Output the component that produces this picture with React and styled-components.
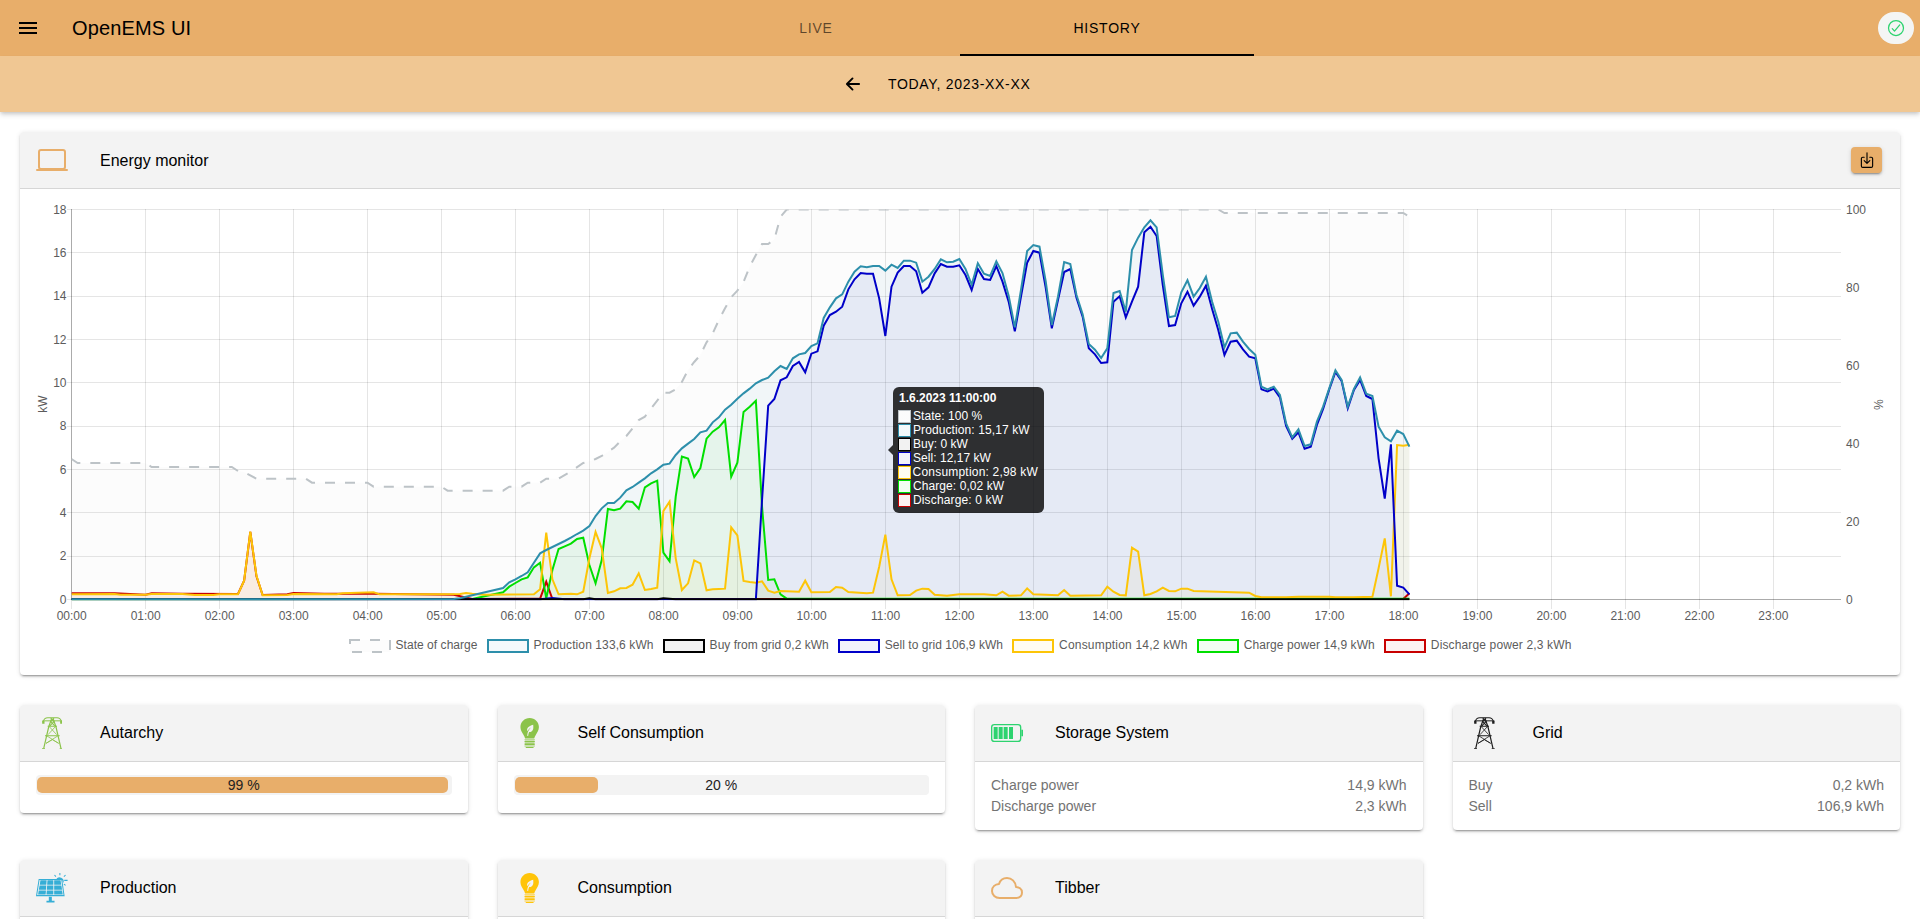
import React from "react";
import styled, { createGlobalStyle } from "styled-components";
import {
  IoLaptopOutline,
  IoCloudOutline,
  IoCheckmarkCircleOutline,
  IoDownloadOutline,
} from "react-icons/io5";

const color = {
  primary: "#e8ae6a",
  secondary: "#f0c793",
  surface: "#f3f3f3",
  green: "#8bc34a",
  success: "#2dd36f",
  yellow: "#ffc409",
  sky: "#36aed6",
  ink: "#1e1e1e",
};

const GlobalStyle = createGlobalStyle`
  *, *::before, *::after { box-sizing: border-box; }
  html, body { margin: 0; padding: 0; }
  body {
    height: 919px;
    overflow: hidden;
    background: #fff;
    color: #000;
    font-family: "Liberation Sans", Arial, Helvetica, sans-serif;
  }
`;

const Page = styled.div`
  width: 1920px;
  height: 919px;
  overflow: hidden;
`;

const TopBar = styled.header`
  display: grid;
  grid-template-columns: 672px 288px 294px 1fr;
  height: 56px;
  background: ${color.primary};
`;

const Brand = styled.div`
  display: flex;
  align-items: center;
  gap: 32px;
  padding-left: 16px;
  font-size: 20px;
  letter-spacing: 0.15px;
  line-height: 56px;
`;

const Tab = styled.div`
  display: flex;
  align-items: center;
  justify-content: center;
  padding-top: 2px;
  font-size: 14px;
  letter-spacing: 0.76px;
  color: ${(p) => (p.$active ? "#000" : "rgba(0,0,0,0.6)")};
  border-bottom: 2px solid ${(p) => (p.$active ? "#000" : "transparent")};
`;

const StatusArea = styled.div`
  display: flex;
  align-items: center;
  justify-content: flex-end;
  padding-right: 6px;
`;

const StatusBadge = styled.div`
  display: flex;
  align-items: center;
  justify-content: center;
  width: 36px;
  height: 32px;
  border-radius: 16px;
  background: #f4f5f4;
  color: ${color.success};
`;

const DateBar = styled.div`
  position: relative;
  display: flex;
  align-items: center;
  height: 56px;
  padding-left: 843px;
  gap: 25px;
  background: ${color.secondary};
  font-size: 14px;
  letter-spacing: 0.69px;
  box-shadow: 0 2px 4px -1px rgba(0, 0, 0, 0.2), 0 4px 5px 0 rgba(0, 0, 0, 0.08);
`;

const Content = styled.main`
  display: flex;
  flex-direction: column;
  gap: 30px;
  padding: 20px;
`;

const CardBox = styled.section`
  display: flex;
  flex-direction: column;
  border-radius: 4px;
  background: #fff;
  box-shadow: 0 3px 1px -2px rgba(0, 0, 0, 0.2), 0 2px 2px 0 rgba(0, 0, 0, 0.14),
    0 1px 5px 0 rgba(0, 0, 0, 0.12);
`;

const CardHeader = styled.div`
  display: flex;
  align-items: center;
  height: 57px;
  padding: 0 18px 0 16px;
  background: ${color.surface};
  border-bottom: 1px solid #d6d6d6;
  border-radius: 4px 4px 0 0;
`;

const IconSlot = styled.div`
  display: flex;
  align-items: center;
  justify-content: center;
  width: 32px;
  height: 36px;
  margin-right: 32px;
  color: ${(p) => p.$tint};
`;

const CardTitle = styled.h2`
  flex: 1;
  margin: 0;
  padding-top: ${(p) => (p.$lowered ? "2px" : "0")};
  font-size: 16px;
  font-weight: 400;
  line-height: 20px;
`;

const ExportButton = styled.button`
  display: flex;
  align-items: center;
  justify-content: center;
  width: 31px;
  height: 26px;
  padding: 0;
  border: 0;
  border-radius: 4px;
  background: ${color.primary};
  color: #000;
  box-shadow: 0 3px 1px -2px rgba(0, 0, 0, 0.2), 0 2px 2px 0 rgba(0, 0, 0, 0.14),
    0 1px 5px 0 rgba(0, 0, 0, 0.12);
`;

const CardGrid = styled.div`
  display: grid;
  grid-template-columns: repeat(4, 1fr);
  gap: 30px;
  align-items: start;
`;

const BarBody = styled.div`
  padding: 13px 16px 18px;
`;

const Track = styled.div`
  position: relative;
  display: flex;
  align-items: center;
  height: 20px;
  border-radius: 4px;
  background: ${color.surface};
`;

const Fill = styled.div`
  width: ${(p) => p.$percent}%;
  height: 16px;
  margin-left: 1px;
  border-radius: 5px;
  background: ${color.primary};
`;

const BarLabel = styled.span`
  position: absolute;
  inset: 0;
  font-size: 14px;
  line-height: 21px;
  text-align: center;
  color: #222;
`;

const ValueBody = styled.div`
  padding: 13px 16px;
`;

const ValueRow = styled.div`
  display: flex;
  justify-content: space-between;
  font-size: 14px;
  line-height: 21px;
  color: #737373;
`;

const ChartBody = styled.div`
  position: relative;
  height: 486px;
`;

const ChartSvg = styled.svg`
  display: block;
  font-family: "Liberation Sans", Arial, Helvetica, sans-serif;
  font-size: 12px;
  fill: #5c5c5c;
`;

const Legend = styled.div`
  display: flex;
  justify-content: center;
  gap: 9px;
  height: 14px;
  margin-top: 11px;
  font-size: 12px;
  line-height: 13px;
  color: #5c5c5c;
`;

const LegendItem = styled.div`
  display: flex;
  gap: 5px;
  white-space: nowrap;
  letter-spacing: ${(p) => p.$tracking}px;
`;

const Tooltip = styled.div`
  position: absolute;
  left: 873px;
  top: 198px;
  width: 151px;
  height: 126px;
  padding: 4px 6px;
  border-radius: 6px;
  background: rgba(0, 0, 0, 0.8);
  color: #fff;
  font-size: 12px;
  line-height: 14px;

  &::before {
    content: "";
    position: absolute;
    left: -5px;
    top: 58px;
    border: 5px solid transparent;
    border-left: 0;
    border-right-color: rgba(0, 0, 0, 0.8);
  }
`;

const TooltipTitle = styled.div`
  margin-bottom: 4px;
  font-weight: 700;
`;

const TooltipRow = styled.div`
  display: flex;
  align-items: center;
  gap: 2px;
  height: 14px;
  white-space: nowrap;
  letter-spacing: ${(p) => p.$tracking}px;
`;

const TooltipSwatch = styled.span`
  width: 13px;
  height: 13px;
  margin: 1px 0 0 -1px;
  border: 1px solid ${(p) => `rgb(${p.$rgb})`};
  background: linear-gradient(rgba(${(p) => p.$rgb}, 0.05), rgba(${(p) => p.$rgb}, 0.05)), #fff;
`;

/* ---------- icons ---------- */

const MenuIcon = () => (
  <svg width="24" height="24" viewBox="0 0 24 24">
    <path d="M3 18h18v-2H3v2zm0-5h18v-2H3v2zm0-7v2h18V6H3z" />
  </svg>
);

const BackIcon = () => (
  <svg width="20" height="20" viewBox="0 0 512 512" fill="none" stroke="#000" strokeWidth="48">
    <path d="M244 400 100 256l144-144M120 256h292" strokeLinecap="round" strokeLinejoin="round" />
  </svg>
);

const PylonIcon = () => (
  <svg width="20.7" height="32.7" viewBox="0 0 62 98" fill="none" stroke="currentColor">
    <path d="M4 18v-5Q7 3 17 2.500H45Q55 3 58 13v5" strokeWidth="3" />
    <path d="M1 11.500H61" strokeWidth="3" />
    <path d="M4 12v8M58 12v8" strokeWidth="7" />
    <path d="M29 4 20 30 14 56 5 95M33 4 42 30 48 56 57 95" strokeWidth="3.600" />
    <path d="M26 3 36 14 24 26M36 3 26 14 38 26M17 28H45M9 56H53" strokeWidth="3" />
    <path d="M21 28 44 53M41 28 18 53M15 57 50 79M47 57 12 79M12 79 31 68 50 79" strokeWidth="2.400" />
    <path d="M0 95.500H9M53 95.500H62" strokeWidth="4" />
  </svg>
);

const BulbIcon = () => (
  <svg width="19" height="30.600" viewBox="-1 0 56 91" fill="currentColor">
    <path d="M27.500 0C43 0 55 12 55 27c0 10-5 16-9 23-3 5-4 8-5 11H14c-1-3-2-6-5-11C5 43 0 37 0 27 0 12 12 0 27.500 0z" />
    <path
      d="M38 20c1 9 1 17-6 21-3 1.500-5 1-6 .5-2 4-2.500 7-3 12h-2.500c0-6 1-11 4-16 2-4 5-7 7-9-5 3-9 8-10 11-5-8 2-15 16.500-19.500z"
      fill="#f3f3f3"
    />
    <rect x="12" y="63" width="31" height="3" rx="1" opacity="0.75" />
    <rect x="12" y="68" width="31" height="5" rx="2" />
    <rect x="12" y="75" width="31" height="5" rx="2" />
    <rect x="12" y="81.500" width="31" height="3.500" rx="1" opacity="0.8" />
    <path d="M15 86h25l-3 5H18z" />
  </svg>
);

const SolarIcon = () => (
  <svg width="32" height="30.500" viewBox="0 0 95 91" fill="currentColor">
    <path d="M59 20a12 12 0 1 1 22 10l-3-9z" />
    <path
      d="M71 0v7M55 6l4 5M88 6l-5 5M84 22h10M83 33l5 4"
      stroke="currentColor"
      strokeWidth="3"
      fill="none"
    />
    <path d="M9 19.500H76.500L83.500 67.500H1.500z" fill="#f3f3f3" stroke="currentColor" strokeWidth="3" />
    <path d="M13 22H31.500L30.500 35H11zM34 22H51.500V35H33zM54 22H73L75 35H54zM10.500 37H30.500L29.500 50H8zM33 37H51.500V50H32zM54 37H75.500L77.500 50H54zM8 52H29.500L28.500 64H6zM32 52H51.500V64H31zM54 52H77.500L79.500 64H54z" />
    <path d="M38 71h9v12h8v5H31v-5h7z" />
  </svg>
);

const BatteryIcon = () => (
  <svg width="32" height="18" viewBox="0 0 96 54" fill="currentColor">
    <rect x="2" y="2" width="87" height="50" rx="8" fill="none" stroke="currentColor" strokeWidth="4" />
    <path d="M8 9h12v36H8zM23 9h12v36H23zM38 9h12v36H38zM54 9h12v36H54zM91 17h5v20h-5z" />
  </svg>
);

/* ---------- chart data ---------- */

// Readings are [five-minute slot, height on the plot]; the plot runs from
// 28.5 (18 kW / 100 %) down to 1198.5 (zero). Slots in between are interpolated.
// "run" lists one reading per slot from a first slot on.
const run = (first, values) => values.map((v, k) => [first + k, v]);

const stateOfCharge = [
  [0, 777], [1, 789], [12, 789], [13, 801], [26, 801], [27, 813], [28, 816], [30, 836], [38, 836],
  [39, 848], [48, 848], [49, 860], [60, 860], [61, 872], [70, 872], [71, 860], [73, 860], [74, 848],
  [76, 848], [77, 836], [79, 836], [81, 814], [83, 789],
  ...run(84, [784, 777, 768, 755, 743, 724, 708, 685, 660, 650, 625, 602, 578, 578, 568, 546, 510,
    486, 465, 427, 400, 360, 325, 292, 272, 246, 200, 165, 132, 132, 118, 50, 28.5]),
  [186, 28.5], [187, 39], [216, 39], [217, 50],
];

const production = [
  [0, 1198], [62, 1197], [63, 1195], [65, 1186], [70, 1164],
  ...run(71, [1147, 1138, 1128, 1117, 1088, 1060, 1050, 1041, 1032, 1023, 1013, 1002, 992, 978,
    948, 925, 909, 909, 893, 871, 861, 848, 835, 820, 808, 794, 791, 765, 745, 731, 717, 697, 692,
    667, 652, 629, 614, 596, 580, 566, 550, 540, 533, 514, 498, 507, 475, 463, 459, 438, 430, 354,
    322, 295, 283, 245, 215, 199, 202, 198, 198, 212, 194, 204, 182, 182, 188, 245, 230, 207, 178,
    187, 185, 177, 207, 254, 190, 221, 228, 184, 219, 287, 382, 270, 153, 135, 140, 243, 375, 290,
    186, 192, 285, 343, 432, 449, 474, 445, 279, 273, 335, 150, 113, 82, 61, 82, 225, 352, 348,
    277, 241, 290, 264, 230, 305, 365, 442, 400, 398, 425, 447, 464, 560, 568, 560, 585, 670, 712,
    688, 738, 733, 665, 620, 565, 511, 540, 620, 567, 532, 581, 588, 680, 712, 724, 692, 702, 740]),
];

const sell = [
  [0, 1197], [76, 1198], [78, 1194], [80, 1198],
  ...run(111, [1198, 900, 617, 597, 541, 532, 498, 486, 517, 461, 454, 377, 345, 335, 320, 268,
    238, 219, 221, 221, 295, 408, 260, 218, 198, 198, 214, 278, 262, 220, 192, 200, 200, 196, 225,
    270, 207, 237, 240, 198, 245, 305, 394, 290, 188, 153, 158, 262, 385, 300, 216, 207, 293, 350,
    445, 463, 489, 487, 305, 289, 352, 305, 260, 97, 80, 108, 255, 378, 375, 310, 275, 317, 290,
    257, 327, 390, 465, 425, 422, 448, 470, 475, 568, 574, 566, 592, 678, 716, 697, 746, 740, 675,
    627, 568, 516, 543, 625, 570, 540, 588, 597, 775, 896, 733, 1157, 1163, 1183]),
];

const charge = [
  [0, 1198], [65, 1197], [67, 1189], [70, 1177],
  ...run(71, [1160, 1149, 1138, 1132, 1102, 1088, 1195, 1110, 1047, 1039, 1031, 1017, 1013, 1095,
    1150, 1080, 927, 931, 926, 904, 906, 926, 862, 850, 842, 1058, 1084, 890, 770, 776, 831, 804,
    716, 695, 682, 660, 830, 788, 636, 620, 602, 920, 1140, 1138, 1183, 1196]),
  [217, 1196],
];

const consumption = [
  [0, 1183], [7, 1182], [8, 1184], [12, 1184], [13, 1182], [18, 1182], [20, 1185], [23, 1185],
  [24, 1183], [27, 1183], [28, 1142], [29, 995], [30, 1127], [31, 1186], [35, 1185], [36, 1182],
  [43, 1183], [44, 1180], [49, 1177], [50, 1183], [60, 1183], [63, 1182], [64, 1179], [65, 1181],
  [67, 1184], [75, 1183],
  ...run(76, [1168, 998, 1138, 1183, 1182, 1181, 1183, 1175, 1075, 996, 1045, 1179, 1174, 1165,
    1164, 1154, 1120, 1170, 1167, 1163, 933, 905, 1075, 1170, 1150, 1081, 1090, 1171, 1168, 1167,
    1166, 982, 1006, 1143, 1146, 1148, 1144, 1172, 1178, 1173]),
  [118, 1175], [119, 1142], [120, 1177], [123, 1176], [124, 1161], [125, 1163], [126, 1176],
  [129, 1180], [130, 1178], [131, 1100], [132, 1004], [133, 1138], [134, 1186], [136, 1185],
  [137, 1172], [138, 1166], [139, 1167], [140, 1184], [142, 1187], [144, 1183], [148, 1183],
  [150, 1186], [151, 1175], [152, 1187], [154, 1186], [155, 1165], [156, 1183], [160, 1186],
  [161, 1170], [162, 1187], [167, 1186], [168, 1160], [169, 1175], [170, 1185], [171, 1186],
  [172, 1043], [173, 1055], [174, 1186], [175, 1182], [176, 1174], [177, 1163], [178, 1173],
  [179, 1174], [180, 1166], [181, 1166], [182, 1173], [191, 1178], [192, 1188], [193, 1192],
  [197, 1192], [199, 1190], [204, 1190], [205, 1192], [208, 1192], [211, 1190], [212, 1105],
  [213, 1015], [214, 1189], [215, 735], [216, 737], [217, 734],
];

const discharge = [
  [0, 1180], [7, 1180], [12, 1184], [13, 1180], [18, 1181], [27, 1182], [28, 1142], [29, 996],
  [30, 1129], [31, 1185], [35, 1183], [36, 1179], [41, 1181], [49, 1181], [62, 1184], [65, 1197],
  [76, 1196], [77, 1145], [78, 1197], [216, 1197], [217, 1180],
];

const buy = [[0, 1198], [83, 1198], [84, 1195], [85, 1198], [95, 1198], [96, 1195], [98, 1198], [217, 1198]];

// Ordered front to back.
const series = [
  { label: "State of charge", tip: "State: 100 %", rgb: "189,195,199", data: stateOfCharge, dash: "10 10", tracking: 0.04 },
  { label: "Production 133,6 kWh", tip: "Production: 15,17 kW", rgb: "45,143,171", data: production, tracking: 0.1 },
  { label: "Buy from grid 0,2 kWh", tip: "Buy: 0 kW", rgb: "0,0,0", data: buy, tracking: 0.02 },
  { label: "Sell to grid 106,9 kWh", tip: "Sell: 12,17 kW", rgb: "0,0,200", data: sell, tracking: 0.04 },
  { label: "Consumption 14,2 kWh", tip: "Consumption: 2,98 kW", rgb: "253,197,7", data: consumption, tracking: 0.2 },
  { label: "Charge power 14,9 kWh", tip: "Charge: 0,02 kW", rgb: "0,223,0", data: charge, tracking: 0.08 },
  { label: "Discharge power 2,3 kWh", tip: "Discharge: 0 kW", rgb: "200,0,0", data: discharge, tracking: 0.14 },
];

const LEFT = 51.5;
const RIGHT = 1821;
const TOP = 20.5;
const BOTTOM = 410.5;
const xOf = (slot) => LEFT + (slot * (RIGHT - LEFT)) / 287;
const yOf = (v) => TOP + (v - 28.5) / 3;
const crisp = (v) => Math.floor(v) + 0.5;

const hours = Array.from({ length: 24 }, (_, h) => h);
const powers = Array.from({ length: 10 }, (_, k) => k * 2);
const percents = [0, 20, 40, 60, 80, 100];

const pointsOf = (data) =>
  data.map(([s, v]) => `${xOf(s).toFixed(2)},${yOf(v).toFixed(2)}`).join(" ");

function SeriesArea({ rgb, data }) {
  const last = xOf(data[data.length - 1][0]).toFixed(2);
  return (
    <polygon
      points={`${LEFT},${BOTTOM} ${pointsOf(data)} ${last},${BOTTOM}`}
      fill={`rgba(${rgb},0.05)`}
    />
  );
}

function SeriesLine({ rgb, data, dash }) {
  return (
    <polyline
      points={pointsOf(data)}
      fill="none"
      stroke={`rgb(${rgb})`}
      strokeWidth="2"
      strokeDasharray={dash}
    />
  );
}

function Chart() {
  const backToFront = [...series].reverse();
  return (
    <ChartSvg width="1880" height="439" viewBox="0 0 1880 439">
      <clipPath id="plot">
        <rect x={LEFT} y={TOP} width={RIGHT - LEFT} height={BOTTOM - TOP + 1} />
      </clipPath>
      <g stroke="rgba(0,0,0,0.1)">
        {hours.map((h) => (
          <line key={h} x1={crisp(xOf(h * 12))} x2={crisp(xOf(h * 12))} y1="20" y2="420" />
        ))}
        {powers.map((p) => {
          const y = crisp(BOTTOM - (p * 390) / 18);
          return <line key={p} x1="47" x2={RIGHT} y1={y} y2={y} />;
        })}
      </g>
      <g stroke="rgba(0,0,0,0.25)">
        <line x1={LEFT} x2={LEFT} y1="20" y2="411" />
        <line x1={LEFT} x2={RIGHT} y1={BOTTOM} y2={BOTTOM} />
      </g>
      <g clipPath="url(#plot)">
        {backToFront.map((s) => (
          <SeriesArea key={s.label} {...s} />
        ))}
        {backToFront.map((s) => (
          <SeriesLine key={s.label} {...s} />
        ))}
      </g>
      {powers.map((p) => (
        <text key={p} x="46.500" y={BOTTOM - (p * 390) / 18 + 4} textAnchor="end">
          {p}
        </text>
      ))}
      {percents.map((p) => (
        <text key={p} x="1826" y={BOTTOM - p * 3.9 + 4}>
          {p}
        </text>
      ))}
      {hours.map((h) => (
        <text key={h} x={xOf(h * 12) + 0.2} y="431" textAnchor="middle">
          {String(h).padStart(2, "0") + ":00"}
        </text>
      ))}
      <text transform="translate(26.500 215) rotate(-90)" textAnchor="middle">
        kW
      </text>
      <text transform="translate(1853.500 215.500) rotate(90)" textAnchor="middle">
        %
      </text>
    </ChartSvg>
  );
}

function LegendSwatch({ rgb, dash }) {
  return (
    <svg width="42" height="14">
      <rect
        x="1"
        y="1"
        width="40"
        height="12"
        fill={`rgba(${rgb},0.05)`}
        stroke={`rgb(${rgb})`}
        strokeWidth="2"
        strokeDasharray={dash}
      />
    </svg>
  );
}

function Card({ title, icon, tint, action, children }) {
  return (
    <CardBox>
      <CardHeader>
        <IconSlot $tint={tint}>{icon}</IconSlot>
        <CardTitle $lowered={Boolean(action)}>{title}</CardTitle>
        {action}
      </CardHeader>
      {children}
    </CardBox>
  );
}

function PercentBar({ percent }) {
  return (
    <BarBody>
      <Track>
        <Fill $percent={percent} />
        <BarLabel>{percent} %</BarLabel>
      </Track>
    </BarBody>
  );
}

function Values({ rows }) {
  return (
    <ValueBody>
      {rows.map(([name, value]) => (
        <ValueRow key={name}>
          <span>{name}</span>
          <span>{value}</span>
        </ValueRow>
      ))}
    </ValueBody>
  );
}

export default function App() {
  return (
    <Page>
      <GlobalStyle />
      <TopBar>
        <Brand>
          <MenuIcon />
          OpenEMS UI
        </Brand>
        <Tab>LIVE</Tab>
        <Tab $active>HISTORY</Tab>
        <StatusArea>
          <StatusBadge>
            <IoCheckmarkCircleOutline size={20} />
          </StatusBadge>
        </StatusArea>
      </TopBar>
      <DateBar>
        <BackIcon />
        TODAY, 2023-XX-XX
      </DateBar>
      <Content>
        <Card
          title="Energy monitor"
          tint={color.primary}
          icon={<IoLaptopOutline size={32} />}
          action={
            <ExportButton aria-label="Export">
              <IoDownloadOutline size={18} />
            </ExportButton>
          }
        >
          <ChartBody>
            <Chart />
            <Legend>
              {series.map((s) => (
                <LegendItem key={s.label} $tracking={s.tracking}>
                  <LegendSwatch {...s} />
                  {s.label}
                </LegendItem>
              ))}
            </Legend>
            <Tooltip>
              <TooltipTitle>1.6.2023 11:00:00</TooltipTitle>
              {series.map((s) => (
                <TooltipRow key={s.tip} $tracking={s.tracking}>
                  <TooltipSwatch $rgb={s.rgb} />
                  {s.tip}
                </TooltipRow>
              ))}
            </Tooltip>
          </ChartBody>
        </Card>
        <CardGrid>
          <Card title="Autarchy" tint={color.green} icon={<PylonIcon />}>
            <PercentBar percent={99} />
          </Card>
          <Card title="Self Consumption" tint={color.green} icon={<BulbIcon />}>
            <PercentBar percent={20} />
          </Card>
          <Card title="Storage System" tint={color.success} icon={<BatteryIcon />}>
            <Values rows={[["Charge power", "14,9 kWh"], ["Discharge power", "2,3 kWh"]]} />
          </Card>
          <Card title="Grid" tint={color.ink} icon={<PylonIcon />}>
            <Values rows={[["Buy", "0,2 kWh"], ["Sell", "106,9 kWh"]]} />
          </Card>
          <Card title="Production" tint={color.sky} icon={<SolarIcon />}>
            <BarBody />
          </Card>
          <Card title="Consumption" tint={color.yellow} icon={<BulbIcon />}>
            <BarBody />
          </Card>
          <Card title="Tibber" tint={color.primary} icon={<IoCloudOutline size={32} />}>
            <BarBody />
          </Card>
        </CardGrid>
      </Content>
    </Page>
  );
}
